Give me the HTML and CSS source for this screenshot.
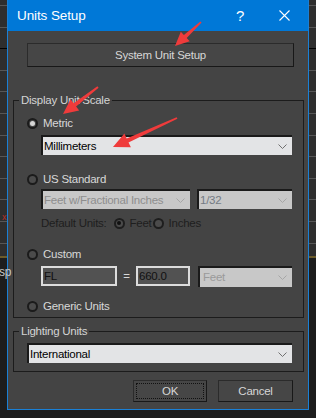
FILE: index.html
```
<!DOCTYPE html>
<html lang="en">
<head>
    <meta charset="UTF-8">
    <meta name="viewport" content="width=device-width, initial-scale=1.0">
    <title>Units Setup</title>
    <link rel="stylesheet" href="styles.css">
</head>
<body>
    <span class="bg-axis">x</span>
    <span class="bg-text">sp</span>
    <div class="dialog">
        <div class="titlebar">
            <span class="title">Units Setup</span>
            <span class="caption-btn help">?</span>
            <span class="caption-btn close">
                <svg width="11" height="11" viewBox="0 0 11 11"><path d="M0.5 0.5 L10.5 10.5 M10.5 0.5 L0.5 10.5" stroke="#fff" stroke-width="1.1"/></svg>
            </span>
        </div>
        <div class="content">
            <button class="btn btn-wide">System Unit Setup</button>

            <fieldset class="group group-scale">
                <legend>Display Unit Scale</legend>
                <div class="radio-row row-metric"><span class="radio checked"></span>Metric</div>
                <div class="select select-light select-metric">
                    <span>Millimeters</span>
                    <svg class="chev" width="9" height="5" viewBox="0 0 9 5"><path d="M0.5 0.5 L4.5 4.5 L8.5 0.5" fill="none" stroke="currentColor"/></svg>
                </div>

                <div class="radio-row row-us"><span class="radio"></span>US Standard</div>
                <div class="field-row row-us-fields">
                    <div class="select select-off select-frac">
                        <span>Feet w/Fractional Inches</span>
                        <svg class="chev" width="9" height="5" viewBox="0 0 9 5"><path d="M0.5 0.5 L4.5 4.5 L8.5 0.5" fill="none" stroke="currentColor"/></svg>
                    </div>
                    <div class="select select-off select-denom">
                        <span>1/32</span>
                        <svg class="chev" width="9" height="5" viewBox="0 0 9 5"><path d="M0.5 0.5 L4.5 4.5 L8.5 0.5" fill="none" stroke="currentColor"/></svg>
                    </div>
                </div>
                <div class="default-row">
                    <span>Default Units:</span>
                    <span class="radio small checked-off"></span><span class="opt">Feet</span>
                    <span class="radio small"></span><span class="opt">Inches</span>
                </div>

                <div class="radio-row row-custom"><span class="radio"></span>Custom</div>
                <div class="field-row row-custom-fields">
                    <div class="textbox tb-name">FL</div>
                    <span class="equals">=</span>
                    <div class="textbox tb-value">660.0</div>
                    <div class="select select-off select-unit">
                        <span>Feet</span>
                        <svg class="chev" width="9" height="5" viewBox="0 0 9 5"><path d="M0.5 0.5 L4.5 4.5 L8.5 0.5" fill="none" stroke="currentColor"/></svg>
                    </div>
                </div>

                <div class="radio-row row-generic"><span class="radio"></span>Generic Units</div>
            </fieldset>

            <fieldset class="group group-light">
                <legend>Lighting Units</legend>
                <div class="select select-light select-lighting">
                    <span>International</span>
                    <svg class="chev" width="9" height="5" viewBox="0 0 9 5"><path d="M0.5 0.5 L4.5 4.5 L8.5 0.5" fill="none" stroke="currentColor"/></svg>
                </div>
            </fieldset>

            <div class="actions">
                <button class="btn btn-ok">OK</button>
                <button class="btn btn-cancel">Cancel</button>
            </div>
        </div>
    </div>

    <!-- red annotation arrows drawn on top of the screenshot -->
    <svg class="marks" width="316" height="418" viewBox="0 0 316 418">
        <polygon fill="#ef3b3b" points="200.4,21.4 183.9,35.0 180.8,31.8 175,46 189.7,41.2 186.7,38.0 201.6,22.6"/>
        <polygon fill="#ef3b3b" points="97.4,86.3 73.7,103.2 70.6,99.3 63,114 79.2,110.4 76.1,106.4 98.6,87.7"/>
        <polygon fill="#ef3b3b" points="176.6,117.3 126.7,138.4 124.4,133.5 113,147 130.9,147.3 128.5,142.4 177.4,118.7"/>
    </svg>
</body>
</html>
```

FILE: styles.css
```
* {
    box-sizing: border-box;
}
body {
    margin: 0;
    width: 316px;
    height: 418px;
    overflow: hidden;
    position: relative;
    font-family: "Liberation Sans", Arial, sans-serif;
    font-size: 11.5px;
    letter-spacing: -0.25px;
    color: #d8d8d8;
    background:
        linear-gradient(#000, #000) 0 48px / 100% 1px no-repeat,
        linear-gradient(#6b5b2a, #6b5b2a) 0 256px / 100% 2px no-repeat,
        repeating-linear-gradient(to bottom, transparent 0 5px, #575757 5px 6px, transparent 6px 21.6px) 0 0 / 100% 256px no-repeat,
        linear-gradient(#2e2e2e, #2e2e2e) 0 0 / 100% 256px no-repeat,
        #1d1d1d;
}
.bg-text {
    position: absolute;
    left: -1px;
    top: 265px;
    color: #c8c8c8;
    font-size: 12px;
}
.bg-axis {
    position: absolute;
    left: 2px;
    top: 212px;
    color: #b8302c;
    font-size: 9px;
}
.dialog {
    margin-left: 7px;
    width: 302px;
    height: 410px;
    border: 1px solid #1a80d6;
    border-top: none;
    background: #444444;
    display: flex;
    flex-direction: column;
}
.titlebar {
    height: 31px;
    background: #0078d7;
    color: #fff;
    display: flex;
    align-items: center;
    padding-left: 9px;
    font-size: 13.5px;
    letter-spacing: -0.1px;
}
.title {
    flex: 1;
}
.caption-btn {
    width: 46px;
    height: 31px;
    display: flex;
    align-items: center;
    justify-content: center;
}
.help {
    font-size: 15px;
    padding-left: 2px;
}
.close svg {
    margin-left: -2px;
}
.content {
    flex: 1;
    display: flex;
    flex-direction: column;
}
.btn {
    font-family: inherit;
    font-size: 11.5px;
    letter-spacing: -0.25px;
    color: #d6d6d6;
    background: #464646;
    border: 1px solid #2b2b2b;
    border-right-color: #181818;
    border-bottom-color: #181818;
    padding: 0;
}
.btn-wide {
    margin: 12px 14px 0 19px;
    height: 24px;
}
.group {
    margin: 0 4px 0 5px;
    padding: 0 0 3px 0;
    border: 1px solid #1c1c1c;
    min-width: 0;
}
.group legend {
    margin-left: 5px;
    padding: 0 2px;
    line-height: 14px;
    color: #d4d4d4;
}
.group-scale {
    margin-top: 26px;
}
.radio-row {
    height: 16px;
    display: flex;
    align-items: center;
    padding-left: 13px;
}
.radio {
    width: 11px;
    height: 11px;
    border-radius: 50%;
    border: 2px solid #1b1b1b;
    background: #4b4b4b;
    margin-right: 5px;
    display: flex;
    align-items: center;
    justify-content: center;
}
.radio.checked::after {
    content: "";
    width: 5px;
    height: 5px;
    border-radius: 50%;
    background: #d6d6d6;
}
.row-metric {
    margin-top: 8px;
}
.row-us {
    margin-top: 16px;
}
.row-custom {
    margin-top: 15px;
}
.row-generic {
    margin-top: 12px;
}
.select {
    height: 20px;
    display: flex;
    align-items: center;
    justify-content: space-between;
    padding: 0 5px 0 1px;
    border-top: 2px solid #1a1a1a;
    border-left: 2px solid #1a1a1a;
    white-space: nowrap;
    overflow: hidden;
}
.select-light {
    background: #e3e4e6;
    color: #000;
}
.select-light .chev {
    color: #707070;
}
.select-off {
    background: #c8c8c8;
    color: #8e8e8e;
}
.select-off .chev {
    color: #a6a6a6;
}
.select-metric {
    margin: 4px 0 0 27px;
    width: 251px;
}
.field-row {
    display: flex;
    align-items: center;
    margin-left: 27px;
}
.row-us-fields {
    margin-top: 2px;
    gap: 7px;
}
.select-frac {
    width: 149px;
}
.select-denom {
    width: 95px;
    color: #747b84;
}
.default-row {
    margin: 6px 0 0 27px;
    height: 16px;
    display: flex;
    align-items: center;
    color: #1e1e1e;
}
.default-row .radio {
    margin: 0 5px 0 0;
    border-color: #1e1e1e;
}
.default-row > span:first-child {
    margin-right: 6px;
}
.radio.checked-off::after {
    content: "";
    width: 4px;
    height: 4px;
    border-radius: 50%;
    background: #111;
}
.radio.small {
    margin-left: 1px;
}
.row-custom-fields {
    margin-top: 4px;
    height: 20px;
}
.textbox {
    height: 20px;
    background: #525252;
    border: 2px solid #dcdcdc;
    color: #111;
    display: flex;
    align-items: center;
    padding-left: 1px;
}
.tb-name {
    width: 76px;
}
.equals {
    width: 19px;
    text-align: center;
    color: #d8d8d8;
}
.tb-value {
    width: 54px;
}
.select-unit {
    margin-left: 8px;
    width: 94px;
    height: 21px;
    color: #9a9a9a;
    padding-left: 3px;
}
.group-light {
    margin-top: 6px;
    padding-bottom: 8px;
}
.select-lighting {
    margin: 5px 0 0 13px;
    width: 265px;
    padding-left: 1px;
}
.actions {
    display: flex;
    justify-content: flex-end;
    gap: 11px;
    margin: 8px 15px 0 0;
}
.actions .btn {
    height: 22px;
}
.btn-ok {
    width: 74px;
    outline: 1px dotted #111;
    outline-offset: -4px;
}
.btn-cancel {
    width: 75px;
}
.marks {
    position: absolute;
    left: 0;
    top: 0;
    pointer-events: none;
}
```
